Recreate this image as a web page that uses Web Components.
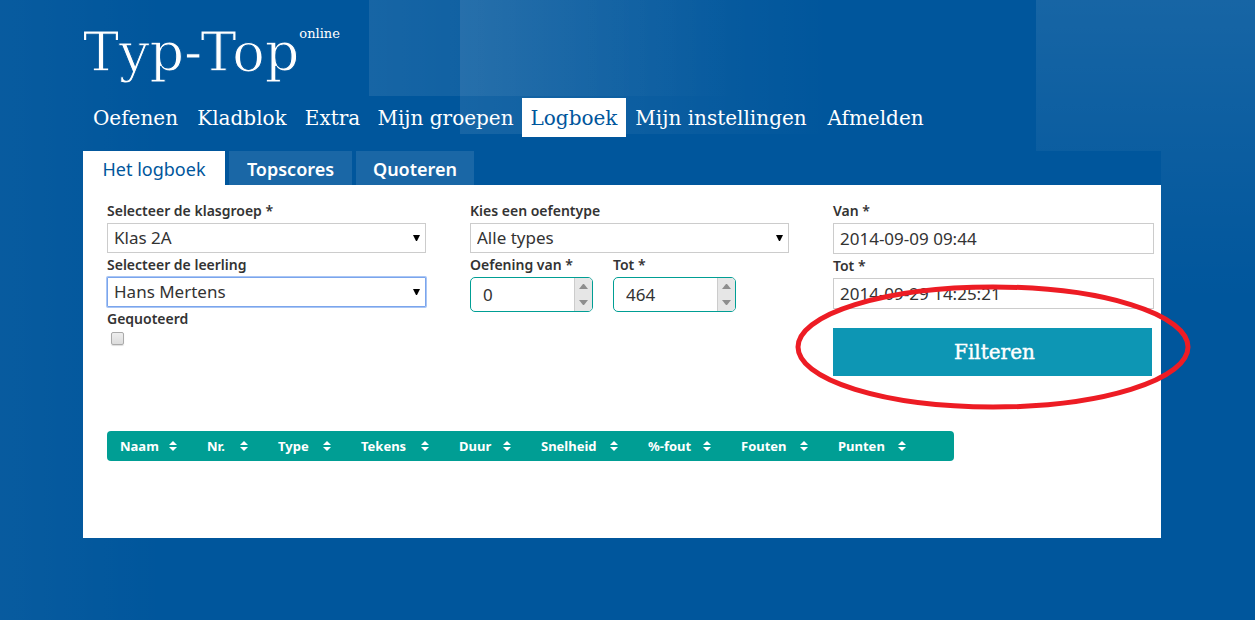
<!DOCTYPE html>
<html lang="nl">
<head>
<meta charset="utf-8">
<title>Typ-Top online - Logboek</title>
<style>
html{min-height:100%;background:#00569c}
body{margin:0;min-height:100vh;font-family:"Noto Sans","Open Sans",sans-serif;color:#333;--blue:#00569c;--teal:#009e94;--slab:"DejaVu Serif",serif}
</style>
</head>
<body>
<typ-page>
  <typ-logo></typ-logo>
  <typ-nav></typ-nav>
  <typ-tabs slot="tabs"></typ-tabs>
  <filter-form slot="content"></filter-form>
  <log-table slot="content"></log-table>
</typ-page>

<script>
const define = (name, html, setup) => customElements.define(name, class extends HTMLElement {
  connectedCallback() {
    if (this.shadowRoot) return;
    const root = this.attachShadow({ mode: "open" });
    const t = document.createElement("template");
    t.innerHTML = html;
    root.append(t.content.cloneNode(true));
    if (setup) setup(this, root);
  }
});

define("typ-page", `<style>
:host{display:block;min-height:100vh;padding:0 94px 0 83px;box-sizing:border-box;
 background:
 linear-gradient(90deg,rgba(255,255,255,.09),rgba(255,255,255,0)) 369px 0/370px 96px no-repeat,
 linear-gradient(90deg,rgba(255,255,255,.09),rgba(255,255,255,0)) 460px 0/370px 134px no-repeat,
 linear-gradient(180deg,rgba(255,255,255,.09),rgba(255,255,255,0)) 1036px 0/100% 300px no-repeat,
 linear-gradient(90deg,rgba(255,255,255,.03),rgba(255,255,255,0)) 0 0/165px 100% no-repeat,
 var(--blue)}
header{height:151px}
main{background:var(--blue)}
section{background:#fff;min-height:353px;padding:14px 7px 0 24px;box-sizing:border-box}
</style>
<header><slot></slot></header>
<main><slot name="tabs"></slot><section><slot name="content"></slot></section></main>`);

define("typ-logo", `<style>
:host{display:block;height:98px}
a{display:flex;align-items:flex-start;padding-top:20px;color:#fff;text-decoration:none;font-family:var(--slab)}
b{font-weight:400;font-size:54px;line-height:66px;-webkit-text-stroke:1px var(--blue)}
sup{font-size:13px;line-height:28px}
</style><a href="#"><b>Typ-Top</b><sup>online</sup></a>`);

define("typ-nav", `<style>
:host{display:block}
nav{display:grid;grid-template-columns:105px 108px 73px 153px 104px 190px 119px}
a{font:20px/40px var(--slab);height:39px;text-align:center;white-space:nowrap;color:#fff;text-decoration:none}
a[aria-current]{background:#fff;color:var(--blue)}
</style><nav><a href="#">Oefenen</a><a href="#">Kladblok</a><a href="#">Extra</a><a href="#">Mijn groepen</a><a href="#" aria-current="page">Logboek</a><a href="#">Mijn instellingen</a><a href="#">Afmelden</a></nav>`);

define("typ-tabs", `<style>
:host{display:block}
nav{display:grid;grid-template-columns:142px 123px 118px;gap:4px}
a{font-size:18px;line-height:36px;height:34px;font-weight:600;text-align:center;color:#fff;background:#1a67a6;text-decoration:none}
a[aria-current]{background:#fff;color:var(--blue);font-weight:400}
</style><nav><a href="#" aria-current="page">Het logboek</a><a href="#">Topscores</a><a href="#">Quoteren</a></nav>`);

const labelCss = `:host{display:block}label{display:block;font-size:14px;line-height:24px;font-weight:600;color:#333}`;
const setLabel = (host, root) => root.querySelector("label").textContent = host.getAttribute("label");

define("select-field", `<style>${labelCss}
div{position:relative}
select{display:block;appearance:none;width:100%;height:30px;box-sizing:border-box;border:1px solid #ccc;border-radius:0;background:#fff;padding:0 6px;font:17px/28px "Noto Sans",sans-serif;color:#333;outline:0}
:host([active]) select{border-color:#7ba5ec;box-shadow:0 0 0 1px #a9c6f5;border-radius:1px}
svg{position:absolute;right:6px;top:12px;pointer-events:none}
</style><label for="c"></label><div><select id="c"></select><svg width="7" height="6"><path d="M0 0H7L4 6H3Z" fill="#000"/></svg></div>`,
(h, r) => { setLabel(h, r); r.querySelector("select").add(new Option(h.getAttribute("value"))); });

define("text-field", `<style>${labelCss}
input{display:block;width:100%;height:31px;box-sizing:border-box;border:1px solid #ccc;padding:0 6px;font:17px "Noto Sans",sans-serif;color:#333;background:#fff}
</style><label for="c"></label><input id="c" type="text">`,
(h, r) => { setLabel(h, r); r.querySelector("input").value = h.getAttribute("value"); });

define("number-field", `<style>${labelCss}
div{display:flex;height:35px;box-sizing:border-box;border:1px solid var(--teal);border-radius:5px;background:#fff}
input{flex:1;min-width:0;border:0;padding:0 12px;font:17px "Noto Sans",sans-serif;color:#333;background:none;appearance:textfield;outline:0}
input::-webkit-inner-spin-button{appearance:none}
span{display:grid;grid-template-rows:1fr 1fr;width:18px;box-sizing:border-box;border-left:1px solid #ccc;border-radius:0 4px 4px 0;background:#e6e6e6}
button{display:grid;place-items:center;border:0;padding:0;background:none}
</style><label for="c"></label><div><input id="c" type="number"><span>
<button type="button" aria-label="Hoger"><svg width="9" height="5"><path d="M0 5L4 0H5L9 5Z" fill="#8e8e8e"/></svg></button>
<button type="button" aria-label="Lager"><svg width="9" height="5"><path d="M0 0L4 5H5L9 0Z" fill="#8e8e8e"/></svg></button></span></div>`,
(h, r) => {
  setLabel(h, r);
  const i = r.querySelector("input"), [up, down] = r.querySelectorAll("button");
  i.value = h.getAttribute("value");
  up.onclick = () => i.stepUp();
  down.onclick = () => i.stepDown();
});

define("check-field", `<style>${labelCss}
input{display:block;appearance:none;width:13px;height:13px;margin:1px 0 0 4px;border:1px solid #aaa;border-radius:2px;box-sizing:border-box;background:linear-gradient(#eee,#dcdcdc);box-shadow:0 1px 1px #ddd}
input:checked{background:#555}
</style><label for="c"></label><input id="c" type="checkbox">`, setLabel);

define("filter-button", `<style>
:host{display:block;position:relative}
button{display:block;width:100%;height:48px;border:0;background:#0d96b4;color:#fff;font:20px var(--slab);padding:0 0 0 4px;-webkit-text-stroke:.4px #fff}
div{position:absolute;left:-38px;right:-39px;top:-44px;bottom:-34px;pointer-events:none}
svg{display:block;width:100%;height:100%}
</style><button type="submit"><slot></slot></button>
<div><svg aria-hidden="true"><ellipse cx="50%" cy="50%" style="rx:calc(50% - 3px);ry:calc(50% - 3px)" fill="none" stroke="#ed1c24" stroke-width="5"/></svg></div>`);

define("filter-form", `<style>
:host{display:block}
form{display:grid;grid-template-columns:1fr 1fr 321px;column-gap:44px;min-height:232px;align-items:start}
.pair{display:grid;grid-template-columns:123px 123px;gap:20px}
filter-button{margin:19px 2px 0 0}
</style><form onsubmit="return false">
<div><select-field label="Selecteer de klasgroep *" value="Klas 2A"></select-field><select-field active label="Selecteer de leerling" value="Hans Mertens"></select-field><check-field label="Gequoteerd"></check-field></div>
<div><select-field label="Kies een oefentype" value="Alle types"></select-field><div class="pair"><number-field label="Oefening van *" value="0"></number-field><number-field label="Tot *" value="464"></number-field></div></div>
<div><text-field label="Van *" value="2014-09-09 09:44"></text-field><text-field label="Tot *" value="2014-09-29 14:25:21"></text-field><filter-button>Filteren</filter-button></div>
</form>`);

define("log-table", `<style>
:host{display:block}
table{border-collapse:collapse;table-layout:fixed;width:847px;max-width:100%;background:var(--teal);border-radius:4px}
th{padding:0 17px 0 13px;height:30px;font-size:13px;line-height:30px;font-weight:700;color:#fff;text-align:left}
th:last-child{padding-right:48px}
div{display:flex;align-items:center;justify-content:space-between}
</style><table><colgroup></colgroup><thead><tr></tr></thead></table>`, (h, r) => {
  const cols = [["Naam",87],["Nr.",71],["Type",83],["Tekens",98],["Duur",82],["Snelheid",107],["%-fout",93],["Fouten",97],["Punten",129]];
  r.querySelector("colgroup").innerHTML = cols.map(c => `<col style="width:${c[1]}px">`).join("");
  r.querySelector("tr").innerHTML = cols.map(c => `<th scope="col"><div>${c[0]}<svg width="8" height="10"><path d="M0 4L4 0L8 4ZM0 6L4 10L8 6Z" fill="#fff"/></svg></div></th>`).join("");
});
</script>
</body>
</html>
